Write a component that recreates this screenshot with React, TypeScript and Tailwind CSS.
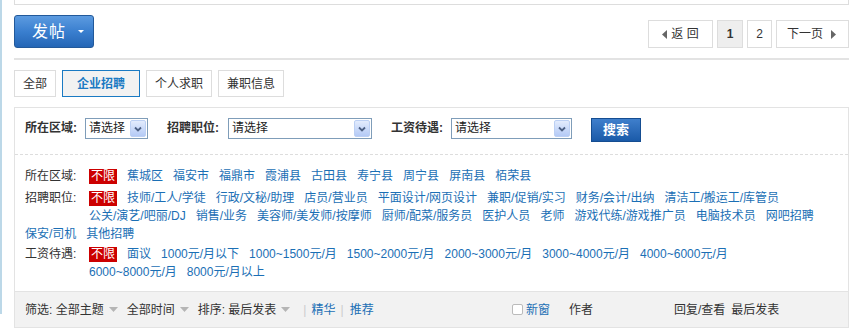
import React from 'react';

const link = 'text-[#1b6fb5] whitespace-nowrap';

const FakeSelect: React.FC<{ width: string }> = ({ width }) => (
  <div className={`${width} h-[21px] border border-[#7f9db9] bg-white flex items-center justify-between`}>
    <span className="pl-[3px] text-[12px] leading-[19px] text-[#222]">请选择</span>
    <span className="w-[16px] h-[17px] mr-[1px] rounded-[2px] border border-[#bcd0f4] bg-gradient-to-b from-[#e3ecfd] to-[#b4caf6] flex items-center justify-center">
      <svg width="8" height="6" viewBox="0 0 8 6">
        <path d="M1 1.5 L4 4.5 L7 1.5" fill="none" stroke="#4d6185" strokeWidth="1.8" />
      </svg>
    </span>
  </div>
);

const Badge = () => (
  <span className="bg-[#cc0000] text-white px-[2px] leading-[15px] h-[15px] whitespace-nowrap">不限</span>
);

const Line: React.FC<{ label?: string; indent?: boolean; items: string[]; badge?: boolean }> = ({ label, indent, items, badge }) => (
  <div className="flex items-center h-[18px] gap-x-[10px]">
    {label && <span className="w-[54px] text-[#333] whitespace-nowrap">{label}</span>}
    {indent && <span className="w-[54px]" />}
    {badge && <Badge />}
    {items.map(i => (
      <span key={i} className={link}>{i}</span>
    ))}
  </div>
);

const Caret = () => (
  <svg width="9" height="5" viewBox="0 0 9 5" className="mx-[5px]">
    <path d="M0 0 H9 L4.5 5 Z" fill="#b5b5b5" />
  </svg>
);

export default function App() {
  return (
    <div className="w-[861px] h-[329px] bg-white overflow-hidden flex font-['Liberation_Sans','Noto_Sans_CJK_SC',sans-serif] text-[12px] text-[#333]">
      <div className="w-[2px] h-[314px] bg-[#bcd8e8] shrink-0" />
      <div className="ml-[12px] w-[835px] flex flex-col">
        <div className="h-[5px] border-x border-b border-[#dddddd]" />

        <div className="mt-[10px] flex justify-between items-start">
          <button className="w-[80px] h-[33px] rounded-[3px] border border-[#22599a] bg-gradient-to-b from-[#5c9be0] via-[#3a7fcf] to-[#2466b6] text-white flex items-center pl-[17px]">
            <span className="text-[16px] leading-[16px] tracking-[1px]">发帖</span>
            <svg width="6" height="3" viewBox="0 0 6 3" className="ml-[12px]">
              <path d="M0 0 H6 L3 3 Z" fill="#fff" />
            </svg>
          </button>
          <div className="mt-[5px] flex gap-[4px] h-[28px]">
            <div className="w-[65px] border border-[#dddddd] flex items-center justify-center gap-[4px]">
              <svg width="5" height="9" viewBox="0 0 5 9"><path d="M5 0 V9 L0 4.5 Z" fill="#666" /></svg>
              <span>返 回</span>
            </div>
            <div className="w-[26px] border border-[#dddddd] bg-[#eeeeee] flex items-center justify-center font-bold">1</div>
            <div className="w-[25px] border border-[#dddddd] flex items-center justify-center">2</div>
            <div className="w-[73px] border border-[#dddddd] flex items-center pl-[10px] gap-[8px]">
              <span>下一页</span>
              <svg width="5" height="9" viewBox="0 0 5 9"><path d="M0 0 V9 L5 4.5 Z" fill="#666" /></svg>
            </div>
          </div>
        </div>

        <div className="mt-[10px] h-[2px] bg-[#e3e3e3]" />

        <div className="mt-[10px] flex gap-[6px] h-[27px]">
          <div className="w-[42px] border border-[#dddddd] flex items-center justify-center">全部</div>
          <div className="w-[78px] border border-[#1a7ac3] bg-[#f2f2f2] text-[#1a7ac3] font-bold flex items-center justify-center">企业招聘</div>
          <div className="w-[66px] border border-[#dddddd] flex items-center justify-center">个人求职</div>
          <div className="w-[66px] border border-[#dddddd] flex items-center justify-center">兼职信息</div>
        </div>

        <div className="mt-[10px] border-x border-t border-[#e3e3e3] flex flex-col">
          <div className="pt-[10px] pl-[10px] flex items-start">
            <span className="w-[55px] min-w-0 font-bold leading-[21px] mr-[5px] whitespace-nowrap">所在区域:</span>
            <FakeSelect width="w-[63px]" />
            <span className="w-[55px] min-w-0 font-bold leading-[21px] ml-[19px] mr-[6px] whitespace-nowrap">招聘职位:</span>
            <FakeSelect width="w-[144px]" />
            <span className="w-[55px] min-w-0 font-bold leading-[21px] ml-[19px] mr-[5px] whitespace-nowrap">工资待遇:</span>
            <FakeSelect width="w-[121px]" />
            <button className="ml-[19px] w-[50px] h-[24px] border border-[#154d91] bg-gradient-to-b from-[#3f7fcc] to-[#1a5aa8] text-white font-bold text-[13px] leading-[22px]">搜索</button>
          </div>

          <div className="mt-[12px] border-t border-dashed border-[#dddddd]" />

          <div className="pt-[12px] pl-[10px] pb-[10px] flex flex-col">
            <Line label="所在区域:" badge items={['蕉城区', '福安市', '福鼎市', '霞浦县', '古田县', '寿宁县', '周宁县', '屏南县', '栢荣县']} />
            <div className="mt-[4px]">
              <Line label="招聘职位:" badge items={['技师/工人/学徒', '行政/文秘/助理', '店员/营业员', '平面设计/网页设计', '兼职/促销/实习', '财务/会计/出纳', '清洁工/搬运工/库管员']} />
              <Line indent items={['公关/演艺/吧丽/DJ', '销售/业务', '美容师/美发师/按摩师', '厨师/配菜/服务员', '医护人员', '老师', '游戏代练/游戏推广员', '电脑技术员', '网吧招聘']} />
              <Line items={['保安/司机', '其他招聘']} />
            </div>
            <div className="mt-[2px]">
              <Line label="工资待遇:" badge items={['面议', '1000元/月以下', '1000~1500元/月', '1500~2000元/月', '2000~3000元/月', '3000~4000元/月', '4000~6000元/月']} />
              <Line indent items={['6000~8000元/月', '8000元/月以上']} />
            </div>
          </div>

          <div className="h-[37px] border-y border-[#e3e3e3] bg-[#f2f2f2] flex items-center pl-[10px]">
            <div className="w-[487px] flex items-center">
              <span>筛选: 全部主题</span>
              <Caret />
              <span className="ml-[4px]">全部时间</span>
              <Caret />
              <span className="ml-[4px]">排序: 最后发表</span>
              <Caret />
              <span className="ml-[8px] text-[#cccccc]">|</span>
              <span className={`${link} ml-[5px]`}>精华</span>
              <span className="ml-[5px] text-[#cccccc]">|</span>
              <span className={`${link} ml-[6px]`}>推荐</span>
            </div>
            <span className="w-[11px] h-[11px] border border-[#bbbbbb] rounded-[2px] bg-white" />
            <span className={`${link} ml-[3px]`}>新窗</span>
            <span className="ml-[19px] w-[105px]">作者</span>
            <span>回复/查看</span>
            <span className="ml-[6px]">最后发表</span>
          </div>
        </div>
      </div>
    </div>
  );
}
